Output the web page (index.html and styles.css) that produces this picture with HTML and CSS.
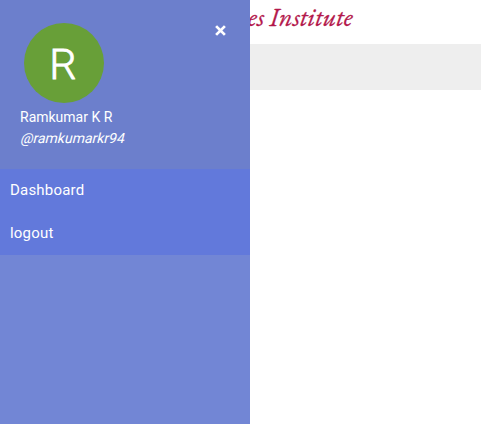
FILE: index.html
```html
<!DOCTYPE html>
<html lang="en">
<head>
<meta charset="utf-8">
<title>Dashboard</title>
<link rel="stylesheet" href="styles.css">
</head>
<body>
<header class="site-title">es Institute</header>
<div class="toolbar"></div>
<aside class="drawer">
  <div class="profile">
    <div class="avatar">R</div>
    <svg class="close" viewBox="0 0 10 10"><path d="M1 1L9 9M9 1L1 9"/></svg>
    <div class="name">Ramkumar K R</div>
    <div class="handle">@ramkumarkr94</div>
  </div>
  <nav class="menu">
    <a class="item">Dashboard</a>
    <a class="item">logout</a>
  </nav>
</aside>
</body>
</html>
```
FILE: styles.css
```css
* { box-sizing: border-box; }
body { margin: 0; height: 424px; overflow: hidden; background: #fff; font-family: Roboto, sans-serif; }
.site-title { height: 44px; padding-left: 248px; font: italic 400 26.2px/35px "EB Garamond", "Liberation Serif", serif; color: #b3174b; -webkit-text-stroke: .3px #b3174b; white-space: nowrap; }
.toolbar { height: 46px; background: #eee; }
.drawer { position: absolute; inset: 0 auto 0 0; width: 250px; background: #7286d5; color: #fff; }
.profile { position: relative; height: 169px; padding: 23px 20px 0; background: #6c7fcc; }
.avatar { width: 80px; height: 80px; margin-left: 4px; padding-right: 2px; border-radius: 50%; background: #689f38; font-size: 43px; font-weight: 300; -webkit-text-stroke: .8px #fff; line-height: 83px; text-align: center; }
.close { position: absolute; left: 215px; top: 25px; width: 11px; height: 11px; fill: none; stroke: #fff; stroke-width: 2.5; }
.name, .handle { font-size: 14px; line-height: 21px; }
.name { margin-top: 4px; }
.handle { padding-left: 1px; transform: skewX(-14deg); }
.menu { background: #6279db; }
.item { display: block; height: 43px; padding-left: 10px; font-size: 15px; line-height: 42px; letter-spacing: .2px; }
```
